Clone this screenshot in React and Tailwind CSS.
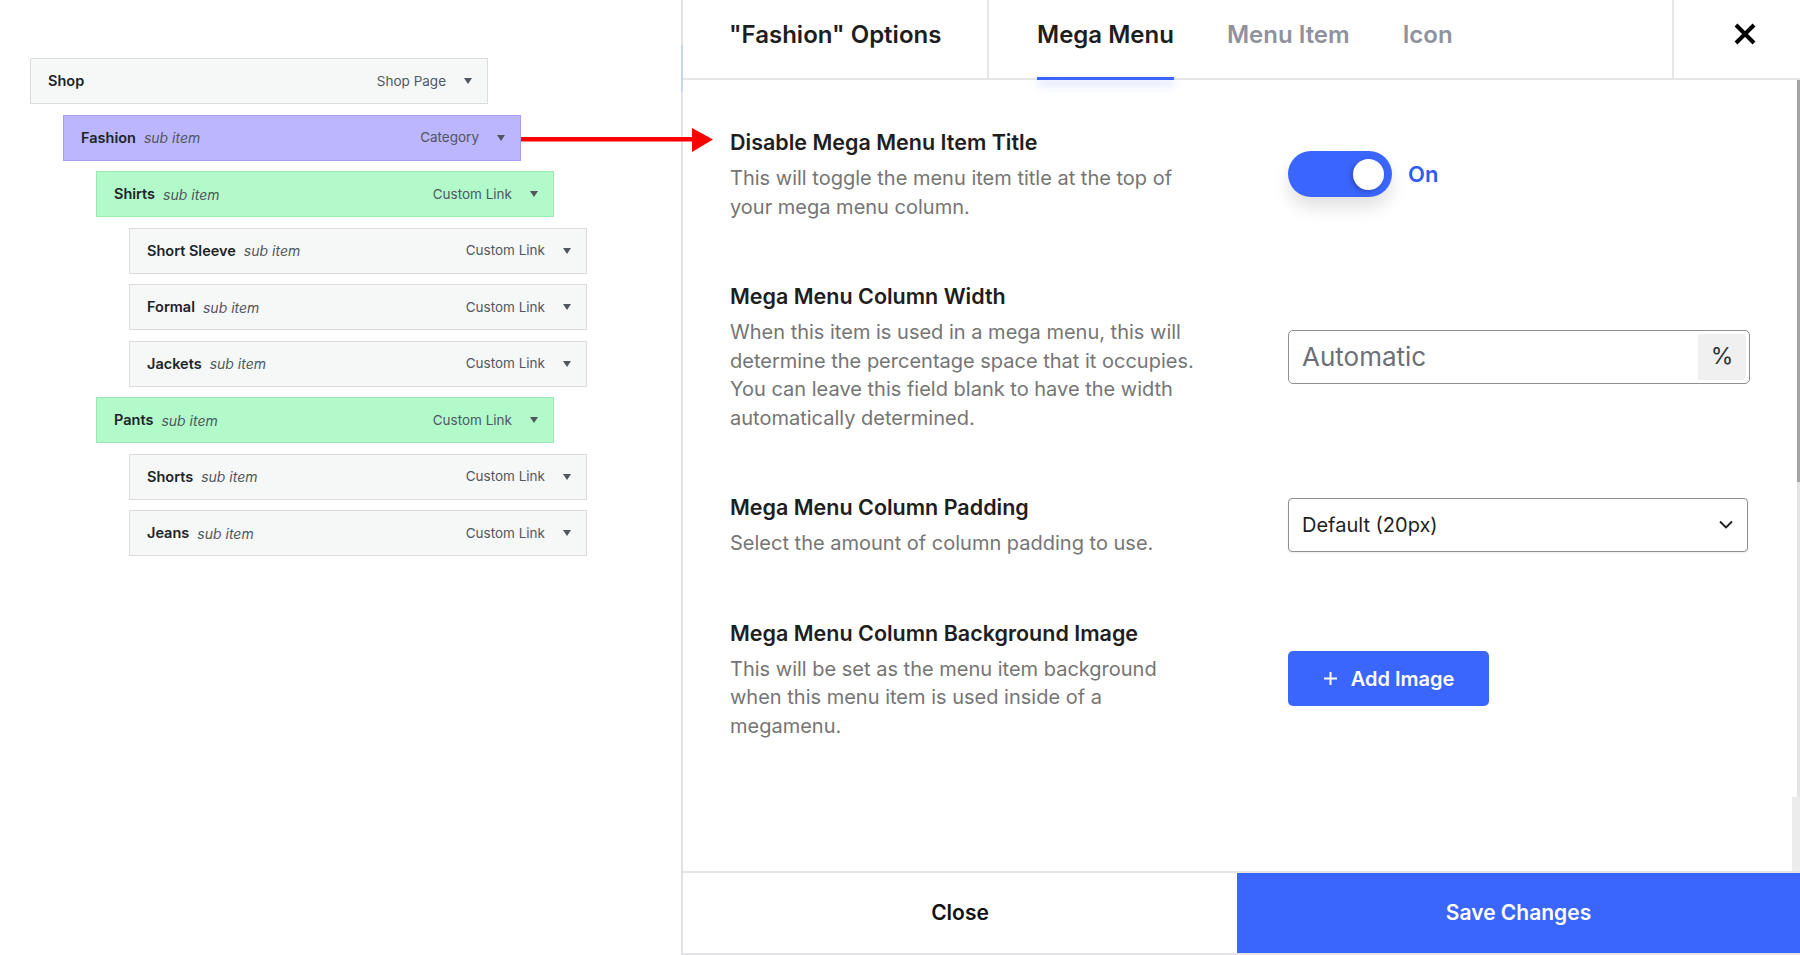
import { useState } from 'react'

const rows = [
  { name: 'Shop', type: 'Shop Page', level: 0, tone: 'plain', sub: false },
  { name: 'Fashion', type: 'Category', level: 1, tone: 'purple', sub: true },
  { name: 'Shirts', type: 'Custom Link', level: 2, tone: 'green', sub: true },
  { name: 'Short Sleeve', type: 'Custom Link', level: 3, tone: 'plain', sub: true },
  { name: 'Formal', type: 'Custom Link', level: 3, tone: 'plain', sub: true },
  { name: 'Jackets', type: 'Custom Link', level: 3, tone: 'plain', sub: true },
  { name: 'Pants', type: 'Custom Link', level: 2, tone: 'green', sub: true },
  { name: 'Shorts', type: 'Custom Link', level: 3, tone: 'plain', sub: true },
  { name: 'Jeans', type: 'Custom Link', level: 3, tone: 'plain', sub: true },
]

const indent = ['ml-[30px]', 'ml-[63px]', 'ml-[96px]', 'ml-[129px]']
const tones = {
  plain: 'bg-[#f6f7f7] border-[#dcdcde]',
  purple: 'bg-[#bbb6fd] border-[#a59ff4]',
  green: 'bg-[#b2fac9] border-[#9de7b3]',
}

function MenuRow({ row }) {
  return (
    <div
      className={`${indent[row.level]} ${tones[row.tone]} flex h-[46px] w-[458px] items-center border pl-[17px] pr-[15px]`}
    >
      <span className="text-[14.5px] font-semibold text-[#1d2327]">{row.name}</span>
      {row.sub && <span className="ml-[8px] text-[14px] italic text-[#50575e]">sub item</span>}
      <span className="ml-auto text-[13.5px] text-[#50575e]">{row.type}</span>
      <svg className="ml-[18px]" width="8" height="6" viewBox="0 0 8 6">
        <path d="M0 0 H8 L4 6 Z" fill="#50575e" />
      </svg>
    </div>
  )
}

function Section({ title, children, control }) {
  return (
    <div className="grid grid-cols-[472px_464px] items-center gap-x-[86px]">
      <div>
        <h3 className="text-[21.5px] font-semibold leading-[30px] text-[#1e1e1e]">{title}</h3>
        <p className="mt-[7px] text-[20px] leading-[28.5px] text-[#757575]">{children}</p>
      </div>
      <div>{control}</div>
    </div>
  )
}

export default function App() {
  const [on, setOn] = useState(true)
  const [tab, setTab] = useState('Mega Menu')

  return (
    <div className="relative flex h-[955px] w-[1800px] overflow-hidden bg-white font-['Inter',sans-serif]">
      {/* menu tree */}
      <div className="flex w-[681px] shrink-0 flex-col gap-[10.5px] pt-[58px]">
        {rows.map((r) => (
          <MenuRow key={r.name} row={r} />
        ))}
      </div>

      {/* options modal */}
      <div className="relative flex h-[955px] flex-1 flex-col border-l-2 border-[#e2e2e4]">
        <div className="absolute -left-[2px] top-[45px] h-[47px] w-[2px] bg-[#c9d5ee]" />

        <div className="flex h-[80px] shrink-0 border-b-2 border-[#e6e6e8]">
          <div className="flex w-[306px] items-center border-r-2 border-[#e6e6e8] pb-[8px] pl-[46px]">
            <span className="text-[24px] font-semibold text-[#1e1e1e]">"Fashion" Options</span>
          </div>
          <div className="flex gap-[53px] pl-[48px]">
            {['Mega Menu', 'Menu Item', 'Icon'].map((t) => (
              <button
                key={t}
                onClick={() => setTab(t)}
                className={`relative flex items-center pb-[8px] text-[24px] font-semibold ${
                  tab === t ? 'text-[#1e1e1e]' : 'text-[#8f929e]'
                }`}
              >
                {t}
                {tab === t && (
                  <span className="absolute -bottom-[2px] left-0 h-[3px] w-full bg-[#3a66ff] shadow-[0_4px_10px_rgba(58,102,255,0.35)]" />
                )}
              </button>
            ))}
          </div>
          <div className="ml-auto flex w-[128px] items-center border-l-2 border-[#e6e6e8] pb-[10px] pl-[60px]">
            <svg width="22" height="22" viewBox="0 0 22 22">
              <path d="M2 2 L20 20 M20 2 L2 20" stroke="#000" strokeWidth="4" />
            </svg>
          </div>
        </div>

        <div className="relative flex min-h-0 flex-1">
          <div className="flex flex-1 flex-col gap-y-[60px] pl-[47px] pt-[47px]">
            <Section
              title="Disable Mega Menu Item Title"
              control={
                <div className="flex items-center">
                  <button
                    onClick={() => setOn(!on)}
                    className="relative h-[46px] w-[104px] rounded-full bg-[#3a66ff] shadow-[0_10px_18px_rgba(0,0,0,0.12)]"
                  >
                    <span
                      className={`absolute top-[7.5px] h-[31px] w-[31px] rounded-full bg-white shadow-[-2px_2px_5px_rgba(0,0,0,0.25)] ${
                        on ? 'right-[8px]' : 'left-[8px]'
                      }`}
                    />
                  </button>
                  <span className="ml-[16px] text-[22px] font-semibold text-[#2d5bf5]">{on ? 'On' : 'Off'}</span>
                </div>
              }
            >
              This will toggle the menu item title at the top of your mega menu column.
            </Section>

            <Section
              title="Mega Menu Column Width"
              control={
                <div className="flex h-[54px] w-[462px] items-stretch rounded-[5px] border-[1.5px] border-[#8c8f94]">
                  <span className="flex flex-1 items-center pl-[13px] text-[26px] text-[#6c7077]">Automatic</span>
                  <span className="m-[3px] ml-0 flex w-[48px] items-center justify-center rounded-r-[3px] bg-[#f0f0f1] text-[23px] text-[#2c3338]">
                    %
                  </span>
                </div>
              }
            >
              When this item is used in a mega menu, this will determine the percentage space that it occupies. You can
              leave this field blank to have the width automatically determined.
            </Section>

            <Section
              title="Mega Menu Column Padding"
              control={
                <div className="flex h-[54px] w-[460px] items-center rounded-[4px] border-[1.5px] border-[#8c8f94] pl-[13px] pr-[14px] shadow-[0_1px_2px_rgba(0,0,0,0.08)]">
                  <span className="text-[20px] text-[#1e1e1e]">Default (20px)</span>
                  <svg className="ml-auto" width="14" height="9" viewBox="0 0 14 9">
                    <path d="M1 1.5 L7 7.5 L13 1.5" fill="none" stroke="#1e1e1e" strokeWidth="1.8" />
                  </svg>
                </div>
              }
            >
              Select the amount of column padding to use.
            </Section>

            <Section
              title="Mega Menu Column Background Image"
              control={
                <button className="flex h-[55px] w-[201px] items-center justify-center gap-[13px] rounded-[5px] bg-[#3b66fe] text-[20px] font-semibold text-white">
                  <svg width="15" height="15" viewBox="0 0 15 15">
                    <path d="M7.5 1 V14 M1 7.5 H14" stroke="#fff" strokeWidth="2" />
                  </svg>
                  Add Image
                </button>
              }
            >
              This will be set as the menu item background when this menu item is used inside of a megamenu.
            </Section>
          </div>

          {/* scrollbar */}
          <div className="relative w-[8px] shrink-0">
            <div className="absolute right-0 top-0 h-full w-[3px] bg-[#e4e4e4]" />
            <div className="absolute right-0 top-0 h-[402px] w-[3px] bg-[#a3a3a3]" />
            <div className="absolute bottom-0 right-0 h-[74px] w-[8px] bg-[#ececec]" />
          </div>
        </div>

        <div className="flex h-[84px] shrink-0 border-b-2 border-t-2 border-[#e4e4e6]">
          <button className="flex w-[554px] items-center justify-center text-[21px] font-semibold text-[#111]">
            Close
          </button>
          <button className="flex flex-1 items-center justify-center bg-[#3b66fe] text-[21px] font-semibold text-white">
            Save Changes
          </button>
        </div>
      </div>

      {/* annotation arrow */}
      <svg className="absolute left-[521px] top-[126px]" width="195" height="28" viewBox="0 0 195 28">
        <rect x="0" y="11" width="173" height="4.5" fill="#ff0000" />
        <path d="M171 2 L192 13.5 L171 26 Z" fill="#ff0000" />
      </svg>
    </div>
  )
}
